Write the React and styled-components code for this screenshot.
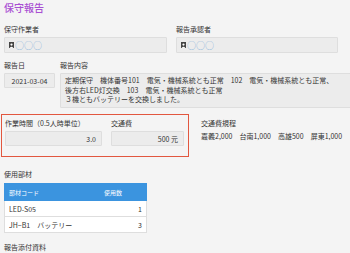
import React from "react";
import styled, { createGlobalStyle } from "styled-components";

const GlobalStyle = createGlobalStyle`
    body {
        margin: 0;
        background: #f4f4f4;
        font-family: "Noto Sans CJK JP", "Noto Sans", sans-serif;
        color: #333;
    }
`;

const Page = styled.div`
    width: 350px;
    height: 253px;
    padding: 0 4px;
    box-sizing: border-box;
    overflow: hidden;
    font-size: 7px;
`;

const Title = styled.div`
    height: 15px;
    line-height: 15px;
    font-size: 10px;
    font-weight: 500;
    color: #a94fd3;
`;

const Row = styled.div`
    display: flex;
    gap: ${props => props.gap || 9}px;
    margin-top: ${props => props.top || 0}px;
    align-items: flex-start;
`;

const Field = styled.div`
    display: flex;
    flex-direction: column;
    gap: 3px;
    width: ${props => props.width ? props.width + "px" : "auto"};
    flex: ${props => props.grow ? 1 : "none"};
`;

const Label = styled.div`
    height: 10px;
    line-height: 10px;
    white-space: nowrap;
    color: #333;
`;

const Box = styled.div`
    box-sizing: border-box;
    background: #ececec;
    border: 1px solid #dedede;
    border-radius: 1px;
    height: ${props => props.h}px;
    padding: ${props => props.pad || "0 5px"};
    display: flex;
    align-items: center;
    justify-content: ${props => props.align || "flex-start"};
    white-space: nowrap;
`;

const TextBox = styled.div`
    box-sizing: border-box;
    background: #ececec;
    border: 1px solid #dedede;
    border-radius: 1px;
    min-height: 35px;
    padding: 2px 4px;
    line-height: 9.5px;
    margin-right: -5px;
`;

const UserIcon = styled.span`
    display: inline-flex;
    align-items: flex-end;
    justify-content: center;
    width: 5px;
    height: 6px;
    background: #444;
    margin-right: 1px;
    overflow: hidden;
`;

const Circles = styled.span`
    color: #8db4da;
    font-size: 9px;
    line-height: 9px;
`;

const CostBox = styled.div`
    margin: 6px 0 0 -3px;
    width: 188px;
    box-sizing: border-box;
    border: 1px solid #e2573f;
    padding: 3px 4px 10px 3px;
    display: flex;
    gap: 9px;
`;

const Rules = styled.div`
    margin-top: 9px;
    padding-left: 3px;
    line-height: 13px;
    white-space: nowrap;
`;

const SectionTitle = styled.div`
    margin-top: ${props => props.top}px;
    height: 10px;
    line-height: 10px;
`;

const Table = styled.div`
    width: 143px;
    margin-top: 4px;
`;

const TableRow = styled.div`
    display: grid;
    grid-template-columns: 95px 1fr;
    height: ${props => props.head ? 18 : 16}px;
    align-items: center;
    padding: 0 4px;
    box-sizing: border-box;
    background: ${props => props.head ? "#3b94df" : "#fff"};
    color: ${props => props.head ? "#fff" : "#333"};
    font-size: ${props => props.head ? 6 : 7}px;
    border: 1px solid ${props => props.head ? "#3b94df" : "#dedede"};
    border-top: ${props => props.head ? "1px solid #3b94df" : "none"};
`;

const Num = styled.span`
    text-align: ${props => props.head ? "left" : "right"};
`;

const App = () => {
    const parts = [
        { code: "LED-S05", count: 1 },
        { code: "JH−B1　バッテリー", count: 3 },
    ];

    const user = (
        <>
            <UserIcon>
                <svg width="5" height="5" viewBox="0 0 5 5">
                    <circle cx="2.5" cy="1.6" r="1.1" fill="#fff" />
                    <path d="M0.6 5 Q2.5 2.6 4.4 5 Z" fill="#fff" />
                </svg>
            </UserIcon>
            <Circles>○○○</Circles>
        </>
    );

    return (
        <Page>
            <GlobalStyle />
            <Title>保守報告</Title>
            <Row top={9}>
                <Field width={163}>
                    <Label>保守作業者</Label>
                    <Box h={16} pad="0 4px">{user}</Box>
                </Field>
                <Field width={162}>
                    <Label>報告承認者</Label>
                    <Box h={16} pad="0 4px">{user}</Box>
                </Field>
            </Row>
            <Row top={7} gap={5}>
                <Field width={51}>
                    <Label>報告日</Label>
                    <Box h={15} align="center">2021-03-04</Box>
                </Field>
                <Field grow>
                    <Label>報告内容</Label>
                    <TextBox>
                        定期保守　機体番号101　電気・機械系統とも正常　102　電気・機械系統とも正常、<br />
                        後方右LED灯交換　103　電気・機械系統とも正常<br />
                        ３機ともバッテリーを交換しました。
                    </TextBox>
                </Field>
            </Row>
            <Row gap={0}>
                <CostBox>
                    <Field width={97}>
                        <Label>作業時間（0.5人時単位）</Label>
                        <Box h={15} align="flex-end">3.0</Box>
                    </Field>
                    <Field width={73}>
                        <Label>交通費</Label>
                        <Box h={15} align="flex-end">500 元</Box>
                    </Field>
                </CostBox>
                <Rules>
                    交通費規程<br />
                    嘉義2,000　台南1,000　高雄500　屏東1,000
                </Rules>
            </Row>
            <SectionTitle top={12}>使用部材</SectionTitle>
            <Table>
                <TableRow head>
                    <span>部材コード</span>
                    <Num head>使用数</Num>
                </TableRow>
                {parts.map((p, i) => (
                    <TableRow key={i}>
                        <span>{p.code}</span>
                        <Num>{p.count}</Num>
                    </TableRow>
                ))}
            </Table>
            <SectionTitle top={9}>報告添付資料</SectionTitle>
        </Page>
    );
};

export default App;
